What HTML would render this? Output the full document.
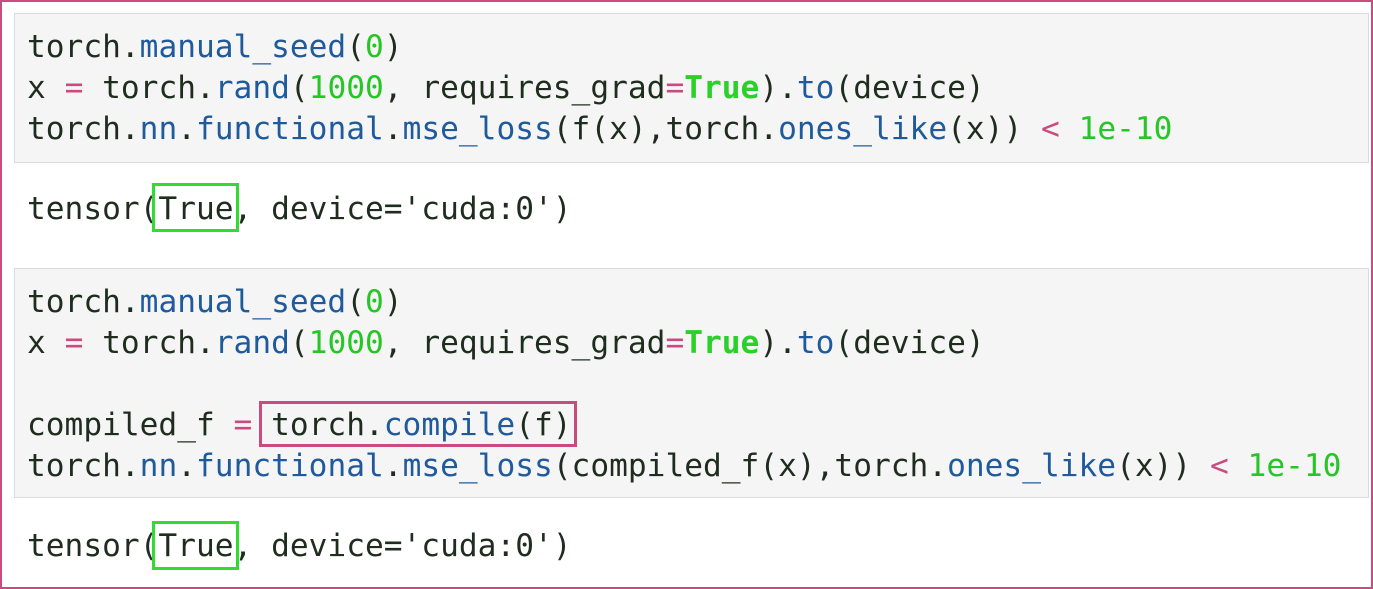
<!DOCTYPE html>
<html><head><style>
html,body{margin:0;padding:0;background:#fff;}
body{width:1373px;height:589px;position:relative;overflow:hidden;font-family:"DejaVu Sans Mono","Liberation Mono",monospace;font-size:31.2px;color:#1f2d1f;}
.frame{position:absolute;left:0;top:0;width:1369px;height:585px;border:2px solid #c94b80;}
.cell{position:absolute;left:14px;width:1355px;background:#f5f5f5;border:1px solid #d9dcdc;box-sizing:border-box;}
pre{margin:0;font:inherit;line-height:41px;white-space:pre;position:absolute;left:27px;}
.b{color:#1f5a9c}.g{color:#2bd02b;font-weight:bold}.n{color:#25c625}.p{color:#c94b80}
.box{position:absolute;box-sizing:border-box;}
</style></head><body>
<div class="frame"></div>
<div class="cell" style="top:13px;height:150px"></div>
<pre style="top:27px">torch.<span class="b">manual_seed</span>(<span class="n">0</span>)
x <span class="p">=</span> torch.<span class="b">rand</span>(<span class="n">1000</span>, requires_grad<span class="p">=</span><span class="g">True</span>).<span class="b">to</span>(device)
torch.<span class="b">nn</span>.<span class="b">functional</span>.<span class="b">mse_loss</span>(f(x),torch.<span class="b">ones_like</span>(x)) <span class="p">&lt;</span> <span class="n">1e-10</span></pre>
<pre style="top:189px">tensor(True, device='cuda:0')</pre>
<div class="box" style="left:152px;top:183px;width:87px;height:49px;border:3px solid #2fdc2f"></div>
<div class="cell" style="top:268px;height:230px"></div>
<pre style="top:282px">torch.<span class="b">manual_seed</span>(<span class="n">0</span>)
x <span class="p">=</span> torch.<span class="b">rand</span>(<span class="n">1000</span>, requires_grad<span class="p">=</span><span class="g">True</span>).<span class="b">to</span>(device)

compiled_f <span class="p">=</span> torch.<span class="b">compile</span>(f)
torch.<span class="b">nn</span>.<span class="b">functional</span>.<span class="b">mse_loss</span>(compiled_f(x),torch.<span class="b">ones_like</span>(x)) <span class="p">&lt;</span> <span class="n">1e-10</span></pre>
<div class="box" style="left:259px;top:401px;width:318px;height:46px;border:3px solid #c94b80"></div>
<pre style="top:526px">tensor(True, device='cuda:0')</pre>
<div class="box" style="left:152px;top:521px;width:87px;height:49px;border:3px solid #2fdc2f"></div>
</body></html>
